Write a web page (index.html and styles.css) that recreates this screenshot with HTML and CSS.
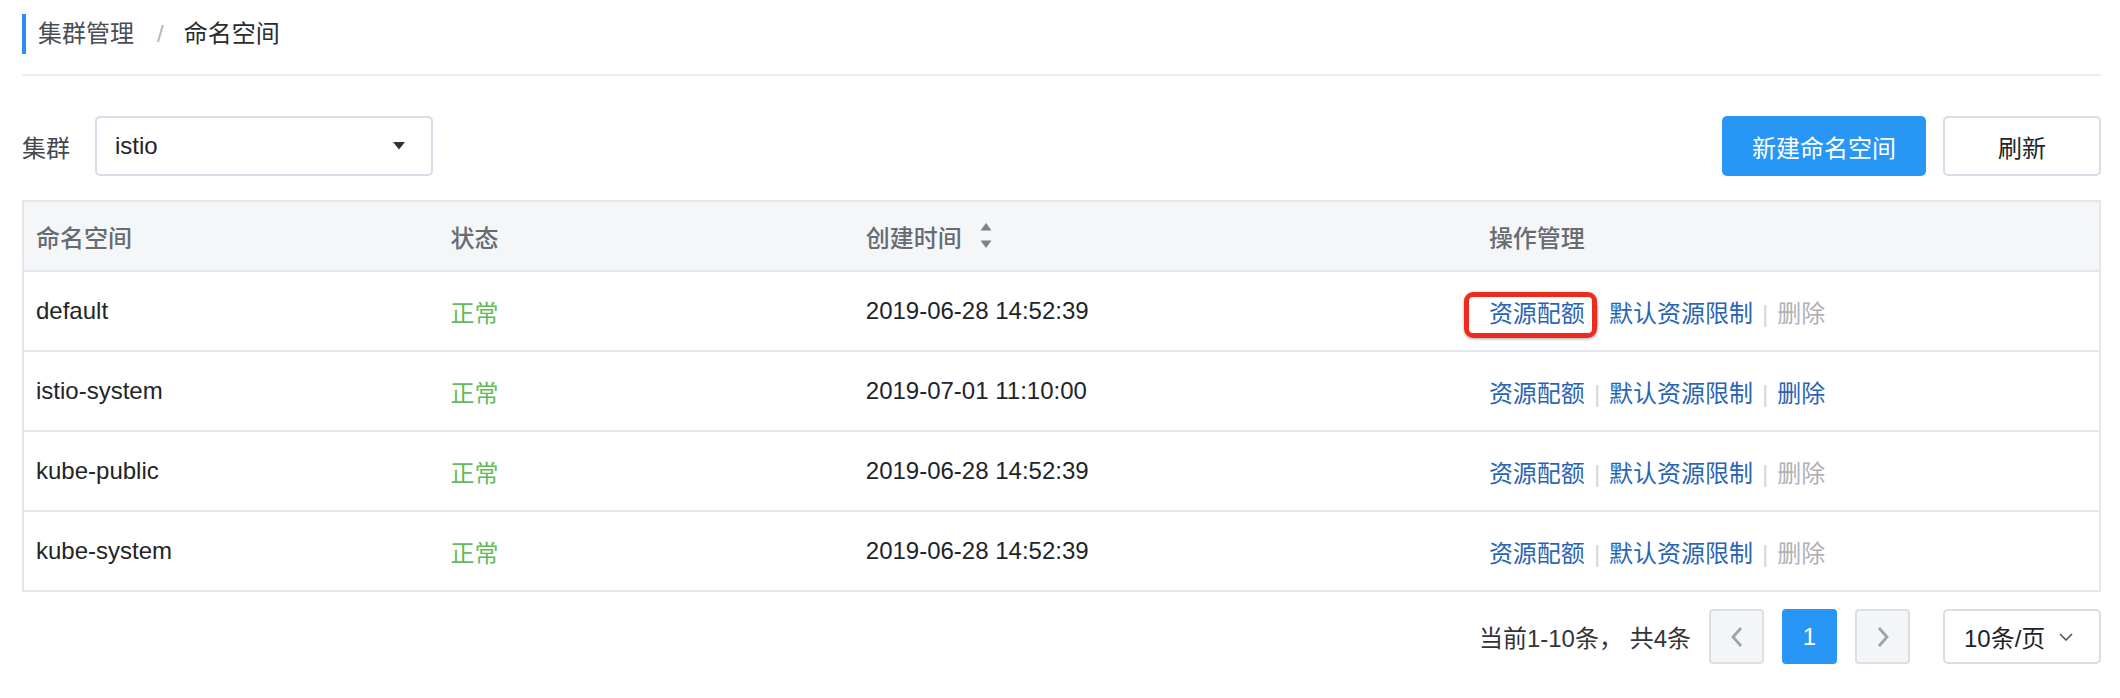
FILE: index.html
```html
<!DOCTYPE html>
<html lang="zh-CN">
<head>
<meta charset="utf-8">
<title>命名空间</title>
<link rel="stylesheet" href="styles.css">
</head>
<body>
<div class="page">
  <div class="crumb-wrap">
    <div class="crumb">
      <span class="crumb-item">集群管理</span>
      <span class="crumb-sep">/</span>
      <span class="crumb-current">命名空间</span>
    </div>
  </div>

  <div class="toolbar">
    <div class="filter">
      <span class="filter-label">集群</span>
      <div class="select">
        <span class="select-value">istio</span>
        <svg class="select-caret" width="12" height="8" viewBox="0 0 12 8"><path d="M0 0H12L6 7.5Z" fill="#333"/></svg>
      </div>
    </div>
    <div class="actions">
      <button class="btn btn-primary">新建命名空间</button>
      <button class="btn btn-default">刷新</button>
    </div>
  </div>

  <table class="grid">
    <colgroup>
      <col class="c1"><col class="c2"><col class="c3"><col class="c4">
    </colgroup>
    <thead>
      <tr>
        <th>命名空间</th>
        <th>状态</th>
        <th><span class="sortable">创建时间<svg class="sort-icon" width="12" height="26" viewBox="0 0 12 26"><path d="M6 0L11.5 7.5H0.5Z" fill="#7b8089"/><path d="M0.5 17.5H11.5L6 25Z" fill="#7b8089"/></svg></span></th>
        <th>操作管理</th>
      </tr>
    </thead>
    <tbody>
      <tr>
        <td>default</td>
        <td class="ok">正常</td>
        <td>2019-06-28 14:52:39</td>
        <td class="ops"><a class="link marked">资源配额</a><span class="bar">|</span><a class="link">默认资源限制</a><span class="bar">|</span><a class="link disabled">删除</a></td>
      </tr>
      <tr>
        <td>istio-system</td>
        <td class="ok">正常</td>
        <td>2019-07-01 11:10:00</td>
        <td class="ops"><a class="link">资源配额</a><span class="bar">|</span><a class="link">默认资源限制</a><span class="bar">|</span><a class="link">删除</a></td>
      </tr>
      <tr>
        <td>kube-public</td>
        <td class="ok">正常</td>
        <td>2019-06-28 14:52:39</td>
        <td class="ops"><a class="link">资源配额</a><span class="bar">|</span><a class="link">默认资源限制</a><span class="bar">|</span><a class="link disabled">删除</a></td>
      </tr>
      <tr>
        <td>kube-system</td>
        <td class="ok">正常</td>
        <td>2019-06-28 14:52:39</td>
        <td class="ops"><a class="link">资源配额</a><span class="bar">|</span><a class="link">默认资源限制</a><span class="bar">|</span><a class="link disabled">删除</a></td>
      </tr>
    </tbody>
  </table>

  <div class="pager">
    <span class="pager-total">当前1-10条， 共4条</span>
    <button class="pg pg-nav"><svg width="12" height="22" viewBox="0 0 12 22"><path d="M10 2L2 11L10 20" fill="none" stroke="#9fa3a9" stroke-width="2.8"/></svg></button>
    <button class="pg pg-active">1</button>
    <button class="pg pg-nav"><svg width="12" height="22" viewBox="0 0 12 22"><path d="M2 2L10 11L2 20" fill="none" stroke="#9fa3a9" stroke-width="2.8"/></svg></button>
    <div class="pg-size">
      <span>10条/页</span>
      <svg width="14" height="8" viewBox="0 0 14 8"><path d="M1 1L7 7L13 1" fill="none" stroke="#555" stroke-width="1.6"/></svg>
    </div>
  </div>
</div>
</body>
</html>
```

FILE: styles.css
```css
* {
  box-sizing: border-box;
}

html, body {
  margin: 0;
  padding: 0;
  background: #ffffff;
}

body {
  font-family: "Liberation Sans", "Noto Sans CJK SC", sans-serif;
  font-size: 24px;
  color: #222428;
}

.page {
  padding: 14px 19px 0 22px;
}

.crumb-wrap {
  padding-bottom: 20px;
  border-bottom: 2px solid #eceef1;
}

.crumb {
  display: flex;
  align-items: center;
  height: 40px;
  border-left: 4px solid #2d8cf0;
  padding-left: 12px;
  line-height: 40px;
}

.crumb-item {
  color: #4a4d52;
}

.crumb-sep {
  color: #b3b6bb;
  margin: 0 20px 0 23px;
}

.crumb-current {
  color: #2a2c30;
}

.toolbar {
  display: flex;
  justify-content: space-between;
  align-items: center;
  margin-top: 40px;
  height: 60px;
}

.filter {
  display: flex;
  align-items: center;
}

.filter-label {
  color: #45484d;
  margin-right: 25px;
}

.select {
  width: 338px;
  height: 60px;
  border: 2px solid #d8dee7;
  border-radius: 5px;
  display: flex;
  align-items: center;
  justify-content: space-between;
  padding: 0 26px 0 18px;
  color: #222428;
}

.select-caret {
  display: block;
}

.actions {
  display: flex;
  gap: 17px;
}

.btn {
  height: 60px;
  font-family: inherit;
  font-size: 24px;
  border-radius: 5px;
  padding: 0;
  cursor: pointer;
}

.btn-primary {
  width: 204px;
  background: #2896f5;
  border: 2px solid #2896f5;
  color: #ffffff;
}

.btn-default {
  width: 158px;
  background: #ffffff;
  border: 2px solid #d8dee7;
  color: #222428;
}

.grid {
  width: 100%;
  margin-top: 24px;
  border-collapse: collapse;
  table-layout: fixed;
  border: 2px solid #e3e6ea;
}

.c1, .c2 {
  width: 20%;
}

.c3, .c4 {
  width: 30%;
}

.grid th {
  height: 70px;
  background: #f5f6f7;
  text-align: left;
  font-weight: 500;
  color: #676c74;
  padding: 0 12px;
  border-bottom: 2px solid #e3e6ea;
}

.grid td {
  height: 80px;
  padding: 0 12px;
  border-bottom: 2px solid #e3e6ea;
  color: #222428;
  white-space: nowrap;
}

.sortable {
  display: inline-flex;
  align-items: center;
}

.sort-icon {
  margin-left: 18px;
}

.grid td.ok {
  color: #62bb5a;
}

.link {
  color: #2b64b5;
  text-decoration: none;
}

.link.disabled {
  color: #aeb1b7;
}

.bar {
  color: #d6d9dd;
  margin: 0 9px;
}

.marked {
  position: relative;
}

.marked::after {
  content: "";
  position: absolute;
  left: -25px;
  right: -12px;
  top: -8px;
  bottom: -11px;
  border: 5px solid #ee2b1f;
  border-radius: 9px;
  box-shadow: 0 1px 3px rgba(0, 0, 0, 0.35);
}

.pager {
  display: flex;
  justify-content: flex-end;
  align-items: center;
  margin-top: 17px;
}

.pager-total {
  color: #333538;
  margin-right: 18px;
}

.pg {
  width: 55px;
  height: 55px;
  border-radius: 4px;
  font-family: inherit;
  font-size: 24px;
  padding: 0;
  display: flex;
  align-items: center;
  justify-content: center;
  margin-right: 18px;
}

.pg-nav {
  background: #f4f5f6;
  border: 2px solid #dcdfe5;
}

.pg-active {
  background: #2896f5;
  border: 2px solid #2896f5;
  color: #ffffff;
}

.pg-size {
  margin-left: 15px;
  width: 158px;
  height: 55px;
  border: 2px solid #d8dee7;
  border-radius: 5px;
  display: flex;
  align-items: center;
  justify-content: space-between;
  padding: 0 26px 0 19px;
  color: #222428;
}
```
